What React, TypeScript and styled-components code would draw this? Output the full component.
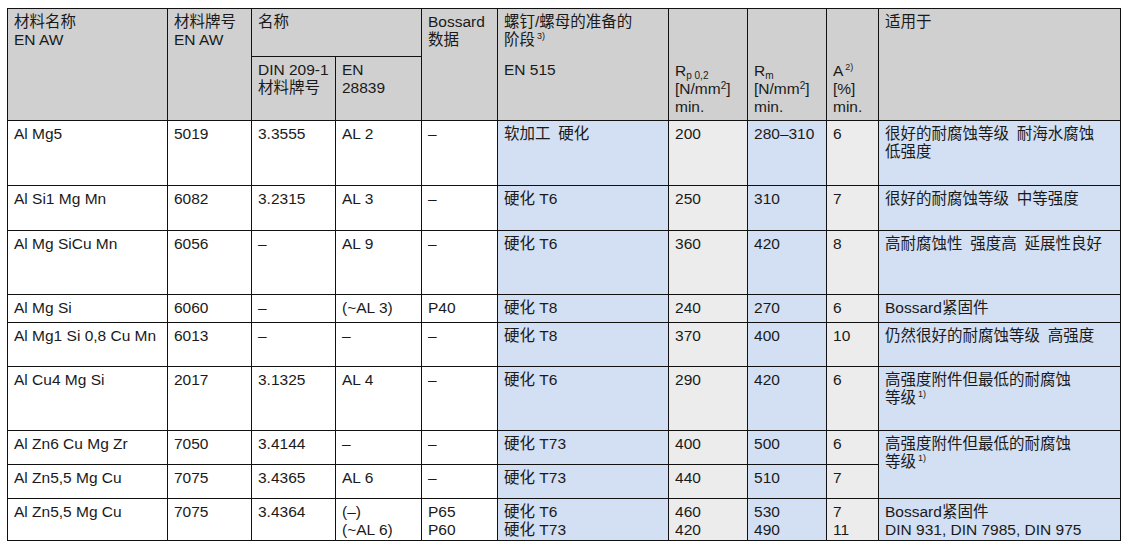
import React from "react";
import styled, { createGlobalStyle } from "styled-components";

const GlobalStyle = createGlobalStyle`
  body {
    margin: 0;
    background: #ffffff;
    font-family: "Liberation Sans", Arial, "Noto Sans CJK SC", sans-serif;
    color: #1a1a1a;
  }
`;

const Page = styled.div`
  padding: 8px 0 0 7px;
`;

const Table = styled.table`
  border-collapse: collapse;
  table-layout: fixed;
  width: 1113px;
  font-size: 15.5px;
  line-height: 18px;
`;

const HeadCell = styled.th<{ $bottom?: boolean; $open?: "top" | "bottom" }>`
  background: #d0d0d0;
  border: 1px solid #111;
  ${(p) => (p.$open === "top" ? "border-bottom: hidden;" : "")}
  ${(p) => (p.$open === "bottom" ? "border-top: hidden;" : "")}
  font-weight: normal;
  text-align: left;
  vertical-align: ${(p) => (p.$bottom ? "bottom" : "top")};
  padding: ${(p) => (p.$bottom ? "0 4px 4px 6px" : "4px 4px 0 6px")};
  white-space: pre-line;
`;

type Tone = "white" | "blue" | "grey";

const tones: Record<Tone, string> = {
  white: "#ffffff",
  blue: "#d3dff2",
  grey: "#ececec",
};

const Cell = styled.td<{ $tone: Tone }>`
  background: ${(p) => tones[p.$tone]};
  border: 1px solid #111;
  vertical-align: top;
  text-align: left;
  padding: 4px 4px 0 6px;
  white-space: pre-line;
`;

const Sup = styled.sup`
  font-size: 9px;
  line-height: 0;
  vertical-align: 6px;
  margin-left: 2px;
`;

const Sub = styled.sub`
  font-size: 10px;
  line-height: 0;
  vertical-align: -3px;
`;

const Sq = styled.sup`
  font-size: 10px;
  line-height: 0;
  vertical-align: 5px;
`;

const tonesByCol: Tone[] = [
  "white", "white", "white", "white", "white",
  "blue", "grey", "blue", "grey", "blue",
];

const widths = [160, 84, 84, 86, 76, 171, 79, 79, 52, 242];

interface Row {
  h: number;
  cells: string[];
}

const rows: Row[] = [
  { h: 65, cells: ["Al Mg5", "5019", "3.3555", "AL 2", "–", "软加工\u2002硬化", "200", "280–310", "6", "很好的耐腐蚀等级\u2002耐海水腐蚀\n低强度"] },
  { h: 45, cells: ["Al Si1 Mg Mn", "6082", "3.2315", "AL 3", "–", "硬化 T6", "250", "310", "7", "很好的耐腐蚀等级\u2002中等强度"] },
  { h: 64, cells: ["Al Mg SiCu Mn", "6056", "–", "AL 9", "–", "硬化 T6", "360", "420", "8", "高耐腐蚀性\u2002强度高\u2002延展性良好"] },
  { h: 28, cells: ["Al Mg Si", "6060", "–", "(~AL 3)", "P40", "硬化 T8", "240", "270", "6", "Bossard紧固件"] },
  { h: 44, cells: ["Al Mg1 Si 0,8 Cu Mn", "6013", "–", "–", "–", "硬化 T8", "370", "400", "10", "仍然很好的耐腐蚀等级\u2002高强度"] },
  { h: 64, cells: ["Al Cu4 Mg Si", "2017", "3.1325", "AL 4", "–", "硬化 T6", "290", "420", "6", "高强度附件但最低的耐腐蚀\n等级"] },
  { h: 34, cells: ["Al Zn6 Cu Mg Zr", "7050", "3.4144", "–", "–", "硬化 T73", "400", "500", "6", "高强度附件但最低的耐腐蚀\n等级"] },
  { h: 34, cells: ["Al Zn5,5 Mg Cu", "7075", "3.4365", "AL 6", "–", "硬化 T73", "440", "510", "7"] },
  { h: 42, cells: ["Al Zn5,5 Mg Cu", "7075", "3.4364", "(–)\n(~AL 6)", "P65\nP60", "硬化 T6\n硬化 T73", "460\n420", "530\n490", "7\n11", "Bossard紧固件\nDIN 931, DIN 7985, DIN 975"] },
];

// rows whose last cell carries footnote 1) and spans into the next row
const footnoteRows = [5, 6];

export default function App() {
  return (
    <Page>
      <GlobalStyle />
      <Table>
        <colgroup>
          {widths.map((w, i) => (
            <col key={i} style={{ width: w }} />
          ))}
        </colgroup>
        <thead>
          <tr style={{ height: 48 }}>
            <HeadCell rowSpan={2}>{"材料名称\nEN AW"}</HeadCell>
            <HeadCell rowSpan={2}>{"材料牌号\nEN AW"}</HeadCell>
            <HeadCell colSpan={2}>名称</HeadCell>
            <HeadCell rowSpan={2}>{"Bossard\n数据"}</HeadCell>
            <HeadCell $open="top">
              {"螺钉/螺母的准备的\n阶段"}
              <Sup>3)</Sup>
            </HeadCell>
            <HeadCell rowSpan={2} $bottom>
              R<Sub>p 0,2</Sub>
              {"\n[N/mm"}
              <Sq>2</Sq>
              {"]\nmin."}
            </HeadCell>
            <HeadCell rowSpan={2} $bottom>
              R<Sub>m</Sub>
              {"\n[N/mm"}
              <Sq>2</Sq>
              {"]\nmin."}
            </HeadCell>
            <HeadCell rowSpan={2} $bottom>
              A<Sup>2)</Sup>
              {"\n[%]\nmin."}
            </HeadCell>
            <HeadCell rowSpan={2}>适用于</HeadCell>
          </tr>
          <tr style={{ height: 64 }}>
            <HeadCell>{"DIN 209-1\n材料牌号"}</HeadCell>
            <HeadCell>{"EN\n28839"}</HeadCell>
            <HeadCell $open="bottom">EN 515</HeadCell>
          </tr>
        </thead>
        <tbody>
          {rows.map((row, r) => (
            <tr key={r} style={{ height: row.h }}>
              {row.cells.map((text, c) => {
                const last = c === 9;
                const foot = last && footnoteRows.includes(r);
                return (
                  <Cell
                    key={c}
                    $tone={tonesByCol[c]}
                    rowSpan={last && r === 6 ? 2 : undefined}
                  >
                    {text}
                    {foot && <Sup>1)</Sup>}
                  </Cell>
                );
              })}
            </tr>
          ))}
        </tbody>
      </Table>
    </Page>
  );
}
